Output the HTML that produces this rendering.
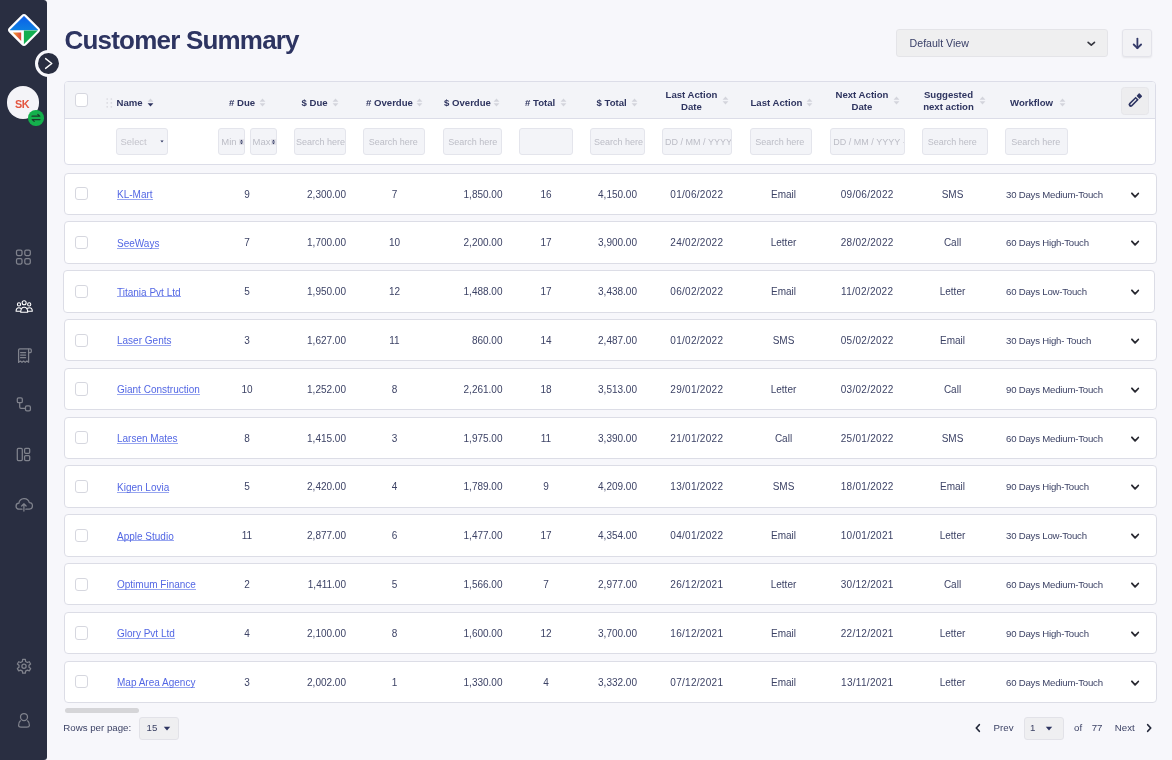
<!DOCTYPE html>
<html><head><meta charset="utf-8">
<style>
*{box-sizing:border-box;margin:0;padding:0}
html,body{width:1172px;height:760px;overflow:hidden;background:#f7f7fb;-webkit-font-smoothing:antialiased;font-family:"Liberation Sans",sans-serif;color:#3d4366}
.abs{position:absolute}
#sb{position:absolute;left:0;top:0;width:47px;height:760px;background:#292e41;border-radius:0 3.5px 3px 0}
h1{position:absolute;left:64.5px;top:25px;font-size:26px;font-weight:bold;color:#2d3461;letter-spacing:-0.8px;white-space:nowrap;line-height:30px}
.colbtn{position:absolute;left:35px;top:50.1px;width:26.8px;height:26.8px;border-radius:50%;background:#292e41;border:3px solid #f7f7fb}
.avatar{position:absolute;left:6.5px;top:86.2px;width:32.6px;height:32.6px;border-radius:50%;background:#f4f4f8;color:#e4553f;font-weight:bold;font-size:10.8px;letter-spacing:-0.5px;text-align:center;line-height:36px;padding-right:1.5px}
.badge{position:absolute;left:28px;top:110.4px;width:15.6px;height:15.6px;border-radius:50%;background:#14b04c}
.sel{position:absolute;left:896px;top:29px;width:212px;height:27.8px;background:#efeff0;border:1px solid #e4e4e8;border-radius:3px;font-size:10.6px;color:#3a4068;line-height:26px;padding-left:12.6px}
.dl{position:absolute;left:1122px;top:29px;width:29.5px;height:27.8px;background:#f2f2f5;border:1px solid #e3e3ea;border-radius:3px;box-shadow:0 1px 2px rgba(0,0,0,.07)}
#hd{position:absolute;left:64px;top:81px;width:1092.3px;height:83.5px;background:#fff;border:1px solid #dcdde8;border-radius:4px;overflow:hidden}
#hdr{position:absolute;left:0;top:0;width:100%;height:37px;background:#f3f4f8;border-bottom:1px solid #dcdde8}
.ht{position:absolute;font-size:9.6px;font-weight:bold;color:#2f3560;white-space:nowrap;line-height:11px}
.ht.c2{width:100px;text-align:center;line-height:11.8px}
.sort{position:absolute}
.fi{position:absolute;top:127.8px;height:27.7px;background:#f3f4f8;border:1px solid #e4e5ec;border-radius:3px;font-size:9px;color:#bcbdc6;white-space:nowrap;overflow:hidden;padding-left:4px;line-height:26px}
.row{position:absolute;left:64px;width:1092.6px;height:42.5px;background:#fff;border:1px solid #dcdde6;border-radius:4px}
.row.sh{left:62.9px;width:1092px}
.row.sh .t{margin-left:-62.9px}
.row.sh .cb{left:10.9px}
.row.sh .chev{left:1065.1px}
.t.dt{letter-spacing:0.3px}
.cb{position:absolute;left:9.8px;top:13.8px;width:13.2px;height:13.2px;border:1px solid #d6d7df;border-radius:3px;background:#fff}
.hcb{position:absolute;left:75.3px;top:93.4px;width:13.2px;height:13.2px;border:1px solid #d6d7df;border-radius:3px;background:#fff}
.t{position:absolute;top:15px;font-size:10px;line-height:12px;white-space:nowrap;color:#3d4366;margin-left:-64px}
.t.c{width:200px;text-align:center}
.t.r{width:200px;text-align:right}
.t.lnk{color:#5367e4;line-height:11px;top:15.5px;background:linear-gradient(#98a6f0,#98a6f0) 0 9.8px/100% 1px no-repeat}
.t.wf{font-size:9.6px;letter-spacing:-0.2px}
.chev{position:absolute;left:1064px;top:17px}
.pt{position:absolute;font-size:9.7px;color:#3d4366;white-space:nowrap;line-height:12px}
.psel{position:absolute;background:#efeff1;border:1px solid #e2e2e8;border-radius:3px}
</style></head><body><div id="wrap" style="position:absolute;left:0;top:0;width:1172px;height:760px;will-change:transform">
<div id="sb"></div>
<svg class="abs" style="left:7px;top:13px" width="34" height="34" viewBox="0 0 34 34">
<defs><linearGradient id="gb" x1="0" y1="0" x2="0" y2="1"><stop offset="0" stop-color="#0b5fe9"/><stop offset="1" stop-color="#0d7fe2"/></linearGradient>
<linearGradient id="go" x1="0" y1="0" x2="1" y2="0"><stop offset="0" stop-color="#f0a034"/><stop offset="1" stop-color="#e0453b"/></linearGradient></defs>
<rect x="4.75" y="4.75" width="24.5" height="24.5" rx="3.6" transform="rotate(45 17 17)" fill="#fff"/>
<path d="M17 3.3 L30.8 16.9 H3.2 Z" fill="url(#gb)" stroke="url(#gb)" stroke-width="0.6" stroke-linejoin="round"/>
<path d="M16.9 17.6 H30.8 L16.9 31.2 Z" fill="#13ae50"/>
<path d="M5.8 19.6 H14.2 V28 Z" fill="url(#go)"/>
</svg>
<div class="colbtn"></div>
<svg class="abs" style="left:44px;top:57px" width="10" height="13" viewBox="0 0 10 13"><path d="M1.6 1.6 L7.8 6.5 L1.6 11.4" fill="none" stroke="#fff" stroke-width="1.4" stroke-linecap="round" stroke-linejoin="round"/></svg>
<div class="avatar">SK</div>
<div class="badge"></div>
<svg class="abs" style="left:28px;top:110.4px" width="16" height="16" viewBox="0 0 16 16"><g fill="none" stroke="#1d3a2c" stroke-width="1.2" stroke-linecap="round" stroke-linejoin="round"><path d="M4 6.2 H11.8 L9.8 4.4"/><path d="M12 9.6 H4.2 L6.2 11.4"/></g></svg>
<svg class="abs" style="left:0;top:0" width="47" height="760" viewBox="0 0 47 760">
<g fill="none" stroke="#80838d" stroke-width="1.25" stroke-linecap="round" stroke-linejoin="round">
<rect x="16.5" y="250" width="5.5" height="5.5" rx="1.4"/><rect x="24.8" y="250" width="5.5" height="5.5" rx="1.4"/>
<rect x="16.5" y="258.5" width="5.5" height="5.5" rx="1.4"/><rect x="24.8" y="258.5" width="5.5" height="5.5" rx="1.4"/>
</g>
<g fill="none" stroke="#ffffff" stroke-width="1.1" stroke-linecap="round" stroke-linejoin="round">
<circle cx="24.15" cy="302.8" r="2"/><circle cx="19" cy="304.4" r="1.6"/><circle cx="29.2" cy="304.4" r="1.6"/>
<path d="M20.7 312.3 C20.7 308.6 22.2 307.2 24.2 307.2 C26.2 307.2 27.7 308.6 27.7 312.3 Z"/>
<path d="M20.4 311.3 H16.1 C16.1 308.9 17.2 307.7 18.9 307.7 C19.7 307.7 20.3 307.9 20.8 308.3"/>
<path d="M28 311.3 H32.3 C32.3 308.9 31.2 307.7 29.5 307.7 C28.7 307.7 28.1 307.9 27.6 308.3"/>
</g>
<g fill="none" stroke="#80838d" stroke-width="1.25" stroke-linecap="round" stroke-linejoin="round">
<path d="M18.6 362.3 V350 a1.2 1.2 0 0 1 1.2 -1.2 H30.1 a1.2 1.2 0 0 1 1.2 1.2 V351.6 a1 1 0 0 1 -1 1 H28.6"/>
<path d="M28.6 349.2 V362.3 l-1.7 -1.2 l-1.7 1.2 l-1.6 -1.2 l-1.6 1.2 l-1.7 -1.2 l-1.7 1.2"/>
<path d="M20.6 352.5 H25.6 M20.6 355.1 H25.6 M20.6 357.7 H25.6"/>
<rect x="17.3" y="397.8" width="5" height="4.9" rx="1.3"/><rect x="25.5" y="405.9" width="4.9" height="5" rx="1.3"/>
<path d="M19.7 402.8 V407 a1.3 1.3 0 0 0 1.3 1.3 H25.4"/>
<rect x="17.3" y="448.3" width="5" height="12.2" rx="1.1"/><rect x="24.6" y="448.3" width="5.1" height="5" rx="1.1"/><rect x="24.6" y="455.5" width="5.1" height="5" rx="1.1"/>
<path d="M22 509.2 H19.2 a3 3 0 0 1 -0.3 -6 a5.3 5.3 0 0 1 10.4 -0.6 a3.3 3.3 0 0 1 -0.3 6.6 H25.8"/>
<path d="M23.9 511 V503.8 M21.7 506 L23.9 503.8 L26.1 506"/>
<path d="M26.50,661.97 L25.58,661.45 L25.34,659.43 L22.66,659.43 L22.42,661.45 L21.50,661.97 L20.59,662.51 L18.72,661.71 L17.38,664.02 L19.01,665.24 L19.00,666.30 L19.01,667.36 L17.38,668.58 L18.72,670.89 L20.59,670.09 L21.50,670.63 L22.42,671.15 L22.66,673.17 L25.34,673.17 L25.58,671.15 L26.50,670.63 L27.41,670.09 L29.28,670.89 L30.62,668.58 L28.99,667.36 L29.00,666.30 L28.99,665.24 L30.62,664.02 L29.28,661.71 L27.41,662.51Z"/>
<circle cx="24" cy="666.3" r="2.1"/>
<circle cx="24" cy="717" r="3.5"/>
<path d="M20.4 720.8 C18.8 722 18.5 724.2 18.6 725.5 C18.7 726.7 19.6 727.1 21 727.1 H27 C28.4 727.1 29.3 726.7 29.4 725.5 C29.5 724.2 29.2 722 27.6 720.8"/>
</g>
</svg>
<h1>Customer Summary</h1>
<div class="sel">Default View</div>
<svg class="abs" style="left:1086px;top:39.5px" width="10" height="7" viewBox="0 0 10 7"><path d="M2.1 2.3 L5.3 5.2 L8.5 2.3" fill="none" stroke="#35363f" stroke-width="1.6" stroke-linecap="round" stroke-linejoin="round"/></svg>
<div class="dl"></div>
<svg class="abs" style="left:1131px;top:34px" width="13" height="17" viewBox="0 0 13 17"><g fill="none" stroke="#343a69" stroke-width="1.8" stroke-linecap="round" stroke-linejoin="round"><path d="M6.4 4.6 V14.2"/><path d="M2.7 10.5 L6.4 14.2 L10.1 10.5"/></g></svg>
<div id="hd"><div id="hdr"></div></div>
<div class="hcb"></div>
<svg class="abs" style="left:105px;top:97px" width="9" height="12" viewBox="0 0 9 12"><g fill="#d9d9df"><circle cx="2.2" cy="2" r="0.85"/><circle cx="6.35" cy="2" r="0.85"/><circle cx="2.2" cy="5.9" r="0.85"/><circle cx="6.35" cy="5.9" r="0.85"/><circle cx="2.2" cy="9.8" r="0.85"/><circle cx="6.35" cy="9.8" r="0.85"/></g></svg>
<span class="ht" style="left:116.5px;top:96.8px">Name</span><svg class="sort" style="left:147px;top:97.5px" width="7" height="9" viewBox="0 0 7 9"><path d="M3.5 0.6 L6.4 3.7 H0.6 Z" fill="#d3d4dc"/><path d="M3.5 8.4 L6.4 5.3 H0.6 Z" fill="#2f3560"/></svg><span class="ht" style="left:229px;top:96.8px"># Due</span><svg class="sort" style="left:258.5px;top:97.5px" width="7" height="9" viewBox="0 0 7 9"><path d="M3.5 0.6 L6.4 3.7 H0.6 Z" fill="#d3d4dc"/><path d="M3.5 8.4 L6.4 5.3 H0.6 Z" fill="#d3d4dc"/></svg><span class="ht" style="left:301.5px;top:96.8px">$ Due</span><svg class="sort" style="left:331.5px;top:97.5px" width="7" height="9" viewBox="0 0 7 9"><path d="M3.5 0.6 L6.4 3.7 H0.6 Z" fill="#d3d4dc"/><path d="M3.5 8.4 L6.4 5.3 H0.6 Z" fill="#d3d4dc"/></svg><span class="ht" style="left:366px;top:96.8px"># Overdue</span><svg class="sort" style="left:415.5px;top:97.5px" width="7" height="9" viewBox="0 0 7 9"><path d="M3.5 0.6 L6.4 3.7 H0.6 Z" fill="#d3d4dc"/><path d="M3.5 8.4 L6.4 5.3 H0.6 Z" fill="#d3d4dc"/></svg><span class="ht" style="left:444px;top:96.8px">$ Overdue</span><svg class="sort" style="left:493px;top:97.5px" width="7" height="9" viewBox="0 0 7 9"><path d="M3.5 0.6 L6.4 3.7 H0.6 Z" fill="#d3d4dc"/><path d="M3.5 8.4 L6.4 5.3 H0.6 Z" fill="#d3d4dc"/></svg><span class="ht" style="left:525px;top:96.8px"># Total</span><svg class="sort" style="left:559.5px;top:97.5px" width="7" height="9" viewBox="0 0 7 9"><path d="M3.5 0.6 L6.4 3.7 H0.6 Z" fill="#d3d4dc"/><path d="M3.5 8.4 L6.4 5.3 H0.6 Z" fill="#d3d4dc"/></svg><span class="ht" style="left:596.5px;top:96.8px">$ Total</span><svg class="sort" style="left:630.5px;top:97.5px" width="7" height="9" viewBox="0 0 7 9"><path d="M3.5 0.6 L6.4 3.7 H0.6 Z" fill="#d3d4dc"/><path d="M3.5 8.4 L6.4 5.3 H0.6 Z" fill="#d3d4dc"/></svg><span class="ht c2" style="left:641.5px;top:89px">Last Action<br>Date</span><svg class="sort" style="left:722px;top:96.2px" width="7" height="9" viewBox="0 0 7 9"><path d="M3.5 0.6 L6.4 3.7 H0.6 Z" fill="#d3d4dc"/><path d="M3.5 8.4 L6.4 5.3 H0.6 Z" fill="#d3d4dc"/></svg><span class="ht" style="left:750.5px;top:96.8px">Last Action</span><svg class="sort" style="left:806px;top:97.5px" width="7" height="9" viewBox="0 0 7 9"><path d="M3.5 0.6 L6.4 3.7 H0.6 Z" fill="#d3d4dc"/><path d="M3.5 8.4 L6.4 5.3 H0.6 Z" fill="#d3d4dc"/></svg><span class="ht c2" style="left:812px;top:89px">Next Action<br>Date</span><svg class="sort" style="left:893px;top:96.2px" width="7" height="9" viewBox="0 0 7 9"><path d="M3.5 0.6 L6.4 3.7 H0.6 Z" fill="#d3d4dc"/><path d="M3.5 8.4 L6.4 5.3 H0.6 Z" fill="#d3d4dc"/></svg><span class="ht c2" style="left:898.5px;top:89px">Suggested<br>next action</span><svg class="sort" style="left:979px;top:96.2px" width="7" height="9" viewBox="0 0 7 9"><path d="M3.5 0.6 L6.4 3.7 H0.6 Z" fill="#d3d4dc"/><path d="M3.5 8.4 L6.4 5.3 H0.6 Z" fill="#d3d4dc"/></svg><span class="ht" style="left:1010px;top:96.8px">Workflow</span><svg class="sort" style="left:1058.5px;top:97.5px" width="7" height="9" viewBox="0 0 7 9"><path d="M3.5 0.6 L6.4 3.7 H0.6 Z" fill="#d3d4dc"/><path d="M3.5 8.4 L6.4 5.3 H0.6 Z" fill="#d3d4dc"/></svg>
<div class="abs" style="left:1121.3px;top:86.5px;width:27.8px;height:28.3px;background:#ededef;border:1px solid #e6e6ea;border-radius:3.5px"></div>
<svg class="abs" style="left:1121px;top:86px" width="28" height="29" viewBox="1121 86 28 29"><g transform="translate(1135 100.4) rotate(-45)" fill="#2d3461"><path fill-rule="evenodd" d="M-8.2 0 a2.2 2.2 0 0 1 2.2 -2.2 H3.1 V2.2 H-6 a2.2 2.2 0 0 1 -2.2 -2.2 Z M-6.2 -0.6 H1.6 V0.6 H-6.2 Z"/><rect x="4.2" y="-2.2" width="4" height="4.4" rx="0.7"/></g></svg>
<div class="fi" style="left:116.1px;width:51.8px;color:#c3c3cb;font-size:9.4px;padding-left:3.5px">Select</div>
<svg class="abs" style="left:159px;top:139px" width="6" height="5" viewBox="0 0 6 5"><path d="M1.4 1.6 H4.6 L3 3.4 Z" fill="#2d3461"/></svg>
<div class="fi" style="left:218.3px;width:26.9px;font-size:9.5px;padding-left:2px">Min</div>
<div class="fi" style="left:250.1px;width:26.6px;font-size:9.5px;padding-left:1.5px">Max</div>
<svg class="abs" style="left:239px;top:138.5px" width="5" height="6" viewBox="0 0 5 6"><rect width="5" height="6" fill="#e2e2e8"/><path d="M2.5 0.8 L4 2.6 H1 Z M2.5 5.2 L4 3.4 H1 Z" fill="#2d3461"/></svg>
<svg class="abs" style="left:271px;top:138.5px" width="5" height="6" viewBox="0 0 5 6"><rect width="5" height="6" fill="#e2e2e8"/><path d="M2.5 0.8 L4 2.6 H1 Z M2.5 5.2 L4 3.4 H1 Z" fill="#2d3461"/></svg>
<div class="fi" style="left:294.2px;width:51.7px;padding-left:0.8px">Search here</div><div class="fi" style="left:363.3px;width:62.2px;padding-left:4.4px">Search here</div><div class="fi" style="left:443.2px;width:58.8px;padding-left:4.1px">Search here</div><div class="fi" style="left:519.2px;width:53.5px;padding-left:-0.5px"></div><div class="fi" style="left:590px;width:54.9px;padding-left:2.9px">Search here</div><div class="fi" style="left:661.8px;width:70.1px;padding-left:2.3px">DD / MM / YYYY</div><div class="fi" style="left:750px;width:62.4px;padding-left:4.2px">Search here</div><div class="fi" style="left:830px;width:74.7px;padding-left:2.3px">DD / MM / YYYY &middot;</div><div class="fi" style="left:922px;width:66.4px;padding-left:4.7px">Search here</div><div class="fi" style="left:1005px;width:62.6px;padding-left:5.3px">Search here</div>
<div class="row" style="top:172.5px"><div class="cb"></div><span class="t lnk" style="left:116px">KL-Mart</span><span class="t c " style="left:146px">9</span><span class="t r " style="left:145px">2,300.00</span><span class="t c " style="left:293.5px">7</span><span class="t r " style="left:301.5px">1,850.00</span><span class="t c " style="left:445px">16</span><span class="t r " style="left:436px">4,150.00</span><span class="t c dt" style="left:595.8px">01/06/2022</span><span class="t c " style="left:682.5px">Email</span><span class="t c dt" style="left:766.2px">09/06/2022</span><span class="t c " style="left:851.5px">SMS</span><span class="t wf" style="left:1005px">30 Days Medium-Touch</span><svg class="chev" width="12" height="8" viewBox="0 0 12 8"><path d="M2.9 2.3 L6.1 5.8 L9.3 2.5" fill="none" stroke="#26272f" stroke-width="1.75" stroke-linecap="round" stroke-linejoin="round"/></svg></div><div class="row" style="top:221.3px"><div class="cb"></div><span class="t lnk" style="left:116px">SeeWays</span><span class="t c " style="left:146px">7</span><span class="t r " style="left:145px">1,700.00</span><span class="t c " style="left:293.5px">10</span><span class="t r " style="left:301.5px">2,200.00</span><span class="t c " style="left:445px">17</span><span class="t r " style="left:436px">3,900.00</span><span class="t c dt" style="left:595.8px">24/02/2022</span><span class="t c " style="left:682.5px">Letter</span><span class="t c dt" style="left:766.2px">28/02/2022</span><span class="t c " style="left:851.5px">Call</span><span class="t wf" style="left:1005px">60 Days High-Touch</span><svg class="chev" width="12" height="8" viewBox="0 0 12 8"><path d="M2.9 2.3 L6.1 5.8 L9.3 2.5" fill="none" stroke="#26272f" stroke-width="1.75" stroke-linecap="round" stroke-linejoin="round"/></svg></div><div class="row sh" style="top:270.1px"><div class="cb"></div><span class="t lnk" style="left:116px">Titania Pvt Ltd</span><span class="t c " style="left:146px">5</span><span class="t r " style="left:145px">1,950.00</span><span class="t c " style="left:293.5px">12</span><span class="t r " style="left:301.5px">1,488.00</span><span class="t c " style="left:445px">17</span><span class="t r " style="left:436px">3,438.00</span><span class="t c dt" style="left:595.8px">06/02/2022</span><span class="t c " style="left:682.5px">Email</span><span class="t c dt" style="left:766.2px">11/02/2022</span><span class="t c " style="left:851.5px">Letter</span><span class="t wf" style="left:1005px">60 Days Low-Touch</span><svg class="chev" width="12" height="8" viewBox="0 0 12 8"><path d="M2.9 2.3 L6.1 5.8 L9.3 2.5" fill="none" stroke="#26272f" stroke-width="1.75" stroke-linecap="round" stroke-linejoin="round"/></svg></div><div class="row" style="top:318.9px"><div class="cb"></div><span class="t lnk" style="left:116px">Laser Gents</span><span class="t c " style="left:146px">3</span><span class="t r " style="left:145px">1,627.00</span><span class="t c " style="left:293.5px">11</span><span class="t r " style="left:301.5px">860.00</span><span class="t c " style="left:445px">14</span><span class="t r " style="left:436px">2,487.00</span><span class="t c dt" style="left:595.8px">01/02/2022</span><span class="t c " style="left:682.5px">SMS</span><span class="t c dt" style="left:766.2px">05/02/2022</span><span class="t c " style="left:851.5px">Email</span><span class="t wf" style="left:1005px">30 Days High- Touch</span><svg class="chev" width="12" height="8" viewBox="0 0 12 8"><path d="M2.9 2.3 L6.1 5.8 L9.3 2.5" fill="none" stroke="#26272f" stroke-width="1.75" stroke-linecap="round" stroke-linejoin="round"/></svg></div><div class="row" style="top:367.7px"><div class="cb"></div><span class="t lnk" style="left:116px">Giant Construction</span><span class="t c " style="left:146px">10</span><span class="t r " style="left:145px">1,252.00</span><span class="t c " style="left:293.5px">8</span><span class="t r " style="left:301.5px">2,261.00</span><span class="t c " style="left:445px">18</span><span class="t r " style="left:436px">3,513.00</span><span class="t c dt" style="left:595.8px">29/01/2022</span><span class="t c " style="left:682.5px">Letter</span><span class="t c dt" style="left:766.2px">03/02/2022</span><span class="t c " style="left:851.5px">Call</span><span class="t wf" style="left:1005px">90 Days Medium-Touch</span><svg class="chev" width="12" height="8" viewBox="0 0 12 8"><path d="M2.9 2.3 L6.1 5.8 L9.3 2.5" fill="none" stroke="#26272f" stroke-width="1.75" stroke-linecap="round" stroke-linejoin="round"/></svg></div><div class="row" style="top:416.5px"><div class="cb"></div><span class="t lnk" style="left:116px">Larsen Mates</span><span class="t c " style="left:146px">8</span><span class="t r " style="left:145px">1,415.00</span><span class="t c " style="left:293.5px">3</span><span class="t r " style="left:301.5px">1,975.00</span><span class="t c " style="left:445px">11</span><span class="t r " style="left:436px">3,390.00</span><span class="t c dt" style="left:595.8px">21/01/2022</span><span class="t c " style="left:682.5px">Call</span><span class="t c dt" style="left:766.2px">25/01/2022</span><span class="t c " style="left:851.5px">SMS</span><span class="t wf" style="left:1005px">60 Days Medium-Touch</span><svg class="chev" width="12" height="8" viewBox="0 0 12 8"><path d="M2.9 2.3 L6.1 5.8 L9.3 2.5" fill="none" stroke="#26272f" stroke-width="1.75" stroke-linecap="round" stroke-linejoin="round"/></svg></div><div class="row" style="top:465.3px"><div class="cb"></div><span class="t lnk" style="left:116px">Kigen Lovia</span><span class="t c " style="left:146px">5</span><span class="t r " style="left:145px">2,420.00</span><span class="t c " style="left:293.5px">4</span><span class="t r " style="left:301.5px">1,789.00</span><span class="t c " style="left:445px">9</span><span class="t r " style="left:436px">4,209.00</span><span class="t c dt" style="left:595.8px">13/01/2022</span><span class="t c " style="left:682.5px">SMS</span><span class="t c dt" style="left:766.2px">18/01/2022</span><span class="t c " style="left:851.5px">Email</span><span class="t wf" style="left:1005px">90 Days High-Touch</span><svg class="chev" width="12" height="8" viewBox="0 0 12 8"><path d="M2.9 2.3 L6.1 5.8 L9.3 2.5" fill="none" stroke="#26272f" stroke-width="1.75" stroke-linecap="round" stroke-linejoin="round"/></svg></div><div class="row" style="top:514.1px"><div class="cb"></div><span class="t lnk" style="left:116px">Apple Studio</span><span class="t c " style="left:146px">11</span><span class="t r " style="left:145px">2,877.00</span><span class="t c " style="left:293.5px">6</span><span class="t r " style="left:301.5px">1,477.00</span><span class="t c " style="left:445px">17</span><span class="t r " style="left:436px">4,354.00</span><span class="t c dt" style="left:595.8px">04/01/2022</span><span class="t c " style="left:682.5px">Email</span><span class="t c dt" style="left:766.2px">10/01/2021</span><span class="t c " style="left:851.5px">Letter</span><span class="t wf" style="left:1005px">30 Days Low-Touch</span><svg class="chev" width="12" height="8" viewBox="0 0 12 8"><path d="M2.9 2.3 L6.1 5.8 L9.3 2.5" fill="none" stroke="#26272f" stroke-width="1.75" stroke-linecap="round" stroke-linejoin="round"/></svg></div><div class="row" style="top:562.9px"><div class="cb"></div><span class="t lnk" style="left:116px">Optimum Finance</span><span class="t c " style="left:146px">2</span><span class="t r " style="left:145px">1,411.00</span><span class="t c " style="left:293.5px">5</span><span class="t r " style="left:301.5px">1,566.00</span><span class="t c " style="left:445px">7</span><span class="t r " style="left:436px">2,977.00</span><span class="t c dt" style="left:595.8px">26/12/2021</span><span class="t c " style="left:682.5px">Letter</span><span class="t c dt" style="left:766.2px">30/12/2021</span><span class="t c " style="left:851.5px">Call</span><span class="t wf" style="left:1005px">60 Days Medium-Touch</span><svg class="chev" width="12" height="8" viewBox="0 0 12 8"><path d="M2.9 2.3 L6.1 5.8 L9.3 2.5" fill="none" stroke="#26272f" stroke-width="1.75" stroke-linecap="round" stroke-linejoin="round"/></svg></div><div class="row" style="top:611.7px"><div class="cb"></div><span class="t lnk" style="left:116px">Glory Pvt Ltd</span><span class="t c " style="left:146px">4</span><span class="t r " style="left:145px">2,100.00</span><span class="t c " style="left:293.5px">8</span><span class="t r " style="left:301.5px">1,600.00</span><span class="t c " style="left:445px">12</span><span class="t r " style="left:436px">3,700.00</span><span class="t c dt" style="left:595.8px">16/12/2021</span><span class="t c " style="left:682.5px">Email</span><span class="t c dt" style="left:766.2px">22/12/2021</span><span class="t c " style="left:851.5px">Letter</span><span class="t wf" style="left:1005px">90 Days High-Touch</span><svg class="chev" width="12" height="8" viewBox="0 0 12 8"><path d="M2.9 2.3 L6.1 5.8 L9.3 2.5" fill="none" stroke="#26272f" stroke-width="1.75" stroke-linecap="round" stroke-linejoin="round"/></svg></div><div class="row" style="top:660.5px"><div class="cb"></div><span class="t lnk" style="left:116px">Map Area Agency</span><span class="t c " style="left:146px">3</span><span class="t r " style="left:145px">2,002.00</span><span class="t c " style="left:293.5px">1</span><span class="t r " style="left:301.5px">1,330.00</span><span class="t c " style="left:445px">4</span><span class="t r " style="left:436px">3,332.00</span><span class="t c dt" style="left:595.8px">07/12/2021</span><span class="t c " style="left:682.5px">Email</span><span class="t c dt" style="left:766.2px">13/11/2021</span><span class="t c " style="left:851.5px">Letter</span><span class="t wf" style="left:1005px">60 Days Medium-Touch</span><svg class="chev" width="12" height="8" viewBox="0 0 12 8"><path d="M2.9 2.3 L6.1 5.8 L9.3 2.5" fill="none" stroke="#26272f" stroke-width="1.75" stroke-linecap="round" stroke-linejoin="round"/></svg></div>
<div class="abs" style="left:64.6px;top:708.4px;width:74.5px;height:4.3px;border-radius:3px;background:#d5d5d8"></div>
<span class="pt" style="left:63.3px;top:721.8px">Rows per page:</span>
<div class="psel" style="left:139px;top:717px;width:39.5px;height:22.6px"></div>
<span class="pt" style="left:146.5px;top:721.8px">15</span>
<svg class="abs" style="left:163px;top:725.8px" width="8" height="6" viewBox="0 0 8 6"><path d="M0.8 0.8 H7.2 L4 4.6 Z" fill="#2d3461"/></svg>
<svg class="abs" style="left:973px;top:722px" width="10" height="12" viewBox="0 0 10 12"><path d="M6.3 2.7 L3.3 6 L6.3 9.3" fill="none" stroke="#23283a" stroke-width="1.7" stroke-linecap="round" stroke-linejoin="round"/></svg>
<span class="pt" style="left:993.6px;top:721.8px">Prev</span>
<div class="psel" style="left:1024px;top:716.7px;width:39.6px;height:23.1px"></div>
<span class="pt" style="left:1030px;top:721.8px">1</span>
<svg class="abs" style="left:1045px;top:725.8px" width="8" height="6" viewBox="0 0 8 6"><path d="M0.8 0.8 H7.2 L4 4.6 Z" fill="#2d3461"/></svg>
<span class="pt" style="left:1074px;top:721.8px">of</span>
<span class="pt" style="left:1091.7px;top:721.8px">77</span>
<span class="pt" style="left:1114.8px;top:721.8px">Next</span>
<svg class="abs" style="left:1144px;top:722px" width="10" height="12" viewBox="0 0 10 12"><path d="M3.7 2.7 L6.7 6 L3.7 9.3" fill="none" stroke="#23283a" stroke-width="1.7" stroke-linecap="round" stroke-linejoin="round"/></svg>
</div></body></html>
